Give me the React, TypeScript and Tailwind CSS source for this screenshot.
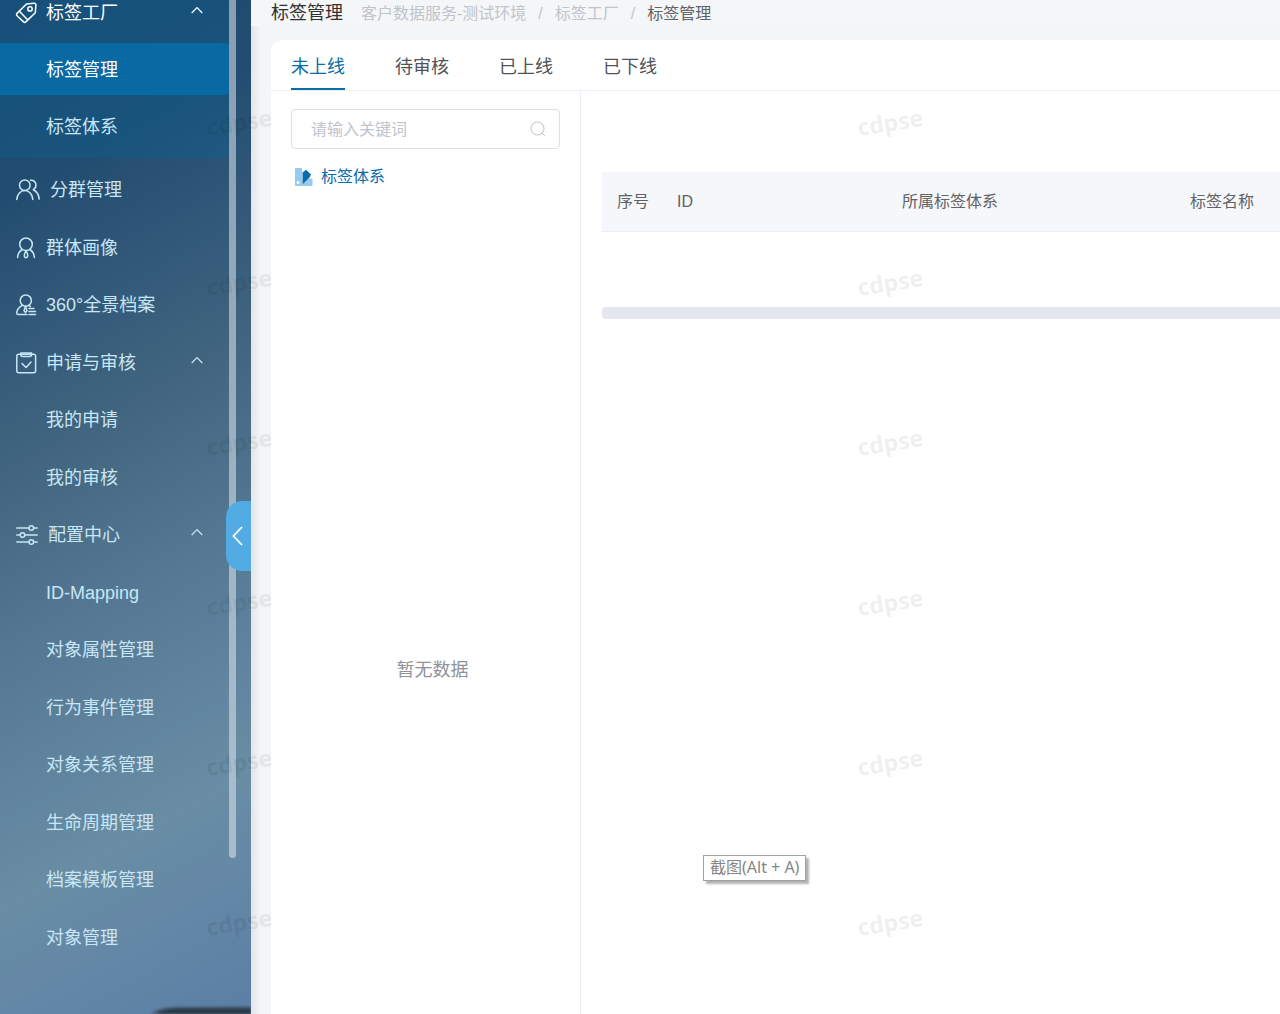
import { useState } from "react";
import type { ReactNode } from "react";
import { clsx } from "clsx";

function Icon({ width = 20, children }: { width?: number; children: ReactNode }) {
  return (
    <svg
      width={width}
      height={22}
      viewBox={`0 0 ${width} 22`}
      fill="none"
      stroke="currentColor"
      strokeWidth={1.5}
      strokeLinecap="round"
      strokeLinejoin="round"
      className="shrink-0 overflow-visible"
      aria-hidden="true"
    >
      {children}
    </svg>
  );
}

const TagIcon = () => (
  <Icon>
    <path d="M10.5 2 18 1.200c1.200-.1 2 .7 1.900 1.900l-.6 7.600-9.500 9.200a1.600 1.600 0 0 1-2.200 0L1 13.700a1.600 1.600 0 0 1 0-2.300z" />
    <path d="m3.400 9.300 8.200 8.400" />
    <circle cx="14" cy="6.900" r="2.200" />
  </Icon>
);

const GroupIcon = () => (
  <Icon width={24}>
    <circle cx="8.800" cy="6.300" r="5.300" />
    <path d="M.8 20.500c.2-5 3.500-8.900 8-8.900s7.800 3.900 8 8.900" />
    <path d="M14.500 1.200c3.200-.4 5.500 2 5.500 4.900 0 2-1 3.700-2.700 4.600 3.200 1.500 5.500 5 5.900 9.400" />
  </Icon>
);

const PortraitIcon = () => (
  <Icon>
    <circle cx="10" cy="7.300" r="6.300" />
    <path d="M1.600 20.500c.2-3.600 1.800-6.300 4.600-8M18.400 20.500c-.2-3.600-1.800-6.300-4.600-8" />
    <path d="M10 14c-1 1.500-1.700 3-1.700 4.300 0 1.400.7 2.400 1.700 2.400s1.700-1 1.700-2.400C11.700 17 11 15.500 10 14z" />
  </Icon>
);

const ArchiveIcon = () => (
  <Icon>
    <circle cx="9.800" cy="6.600" r="5.600" />
    <path d="M6.200 11.300C2.700 13.300.8 16 .8 19.200c0 .8.500 1.300 1.300 1.300H11M13.300 11.600l1 .9" />
    <path d="M9.500 12.600 8 16.500l1.500 2.200 1.500-2.200zM13 14.500h5M13 17.500h6.500M13 20.500h6.500" />
  </Icon>
);

const ClipboardIcon = () => (
  <Icon>
    <rect x=".8" y="2.300" width="18.800" height="18.500" rx="2" />
    <path d="M4.800 1h10.800v1.500a2 2 0 0 1-2 2H6.800a2 2 0 0 1-2-2zM6 11.500l4 4 5-5.500" />
  </Icon>
);

const SlidersIcon = () => (
  <Icon width={22}>
    <path d="M.8 4h12M18 4h3.200M.8 11H4M9 11h12.200M.8 18h12M18 18h3.200" />
    <circle cx="15.300" cy="4" r="2.300" />
    <circle cx="6.500" cy="11" r="2.300" />
    <circle cx="15.300" cy="18" r="2.300" />
  </Icon>
);

const Chevron = ({ open }: { open: boolean }) => (
  <svg
    width="12"
    height="8"
    viewBox="0 0 12 8"
    fill="none"
    stroke="currentColor"
    strokeWidth="1.200"
    className={clsx("mb-1.5 ml-auto", !open && "rotate-180")}
    aria-hidden="true"
  >
    <path d="m.7 7 5.300-5.500L11.300 7" />
  </svg>
);

interface MenuItem {
  label: string;
  icon?: ReactNode;
  expandable?: boolean;
}

const factoryItems: MenuItem[] = [
  { label: "标签工厂", icon: <TagIcon />, expandable: true },
  { label: "标签管理" },
  { label: "标签体系" },
];

const menuItems: MenuItem[] = [
  { label: "分群管理", icon: <GroupIcon /> },
  { label: "群体画像", icon: <PortraitIcon /> },
  { label: "360°全景档案", icon: <ArchiveIcon /> },
  { label: "申请与审核", icon: <ClipboardIcon />, expandable: true },
  { label: "我的申请" },
  { label: "我的审核" },
  { label: "配置中心", icon: <SlidersIcon />, expandable: true },
  { label: "ID-Mapping" },
  { label: "对象属性管理" },
  { label: "行为事件管理" },
  { label: "对象关系管理" },
  { label: "生命周期管理" },
  { label: "档案模板管理" },
  { label: "对象管理" },
];

function MenuRow({ item, active }: { item: MenuItem; active?: boolean }) {
  const rowClass = clsx(
    "flex h-[52px] w-full items-center pt-[2px] pr-[26px]",
    item.icon ? "gap-[10px] pl-4" : "pl-[46px]",
    active && "rounded-r-sm bg-[#0869a3] text-white"
  );

  if (item.expandable) {
    return (
      <button type="button" aria-expanded="true" className={rowClass}>
        {item.icon}
        {item.label}
        <Chevron open />
      </button>
    );
  }

  return (
    <a href="#" className={rowClass} aria-current={active ? "page" : undefined}>
      {item.icon}
      {item.label}
    </a>
  );
}

function Sidebar() {
  return (
    <aside className="relative w-[251px] shrink-0 overflow-hidden bg-[linear-gradient(151deg,#1e486c_0%,#234d70_18%,#33597a_30%,#42667f_42%,#547893_57%,#5f839d_68%,#688da4_79%,#6488a6_87%,#5b7fa5_100%)] text-lg text-[#c8e6f5]">
      <nav className="w-[229px]">
        <ul className="-mt-[17px] rounded-br-sm bg-[#0a6296]/35 pb-[3px]">
          {factoryItems.map((item, i) => (
            <li
              key={item.label}
              className={clsx("flex h-[57px] items-center last:h-[58px]", i === 0 && "text-white")}
            >
              <MenuRow item={item} active={item.label === "标签管理"} />
            </li>
          ))}
        </ul>
        <ul className="pt-[2px]">
          {menuItems.map((item) => (
            <li key={item.label} className="flex items-center odd:h-[58px] even:h-[57px]">
              <MenuRow item={item} />
            </li>
          ))}
        </ul>
      </nav>
      <div className="absolute top-0 right-[15px] h-[858px] w-[7px] rounded-b-full bg-[#dfe6ec]/55" />
      <button
        type="button"
        aria-label="收起菜单"
        className="absolute top-[501px] right-0 flex h-[70px] w-[25px] items-center justify-center rounded-l-2xl bg-[#52ace3] pr-[2px] text-white"
      >
        <svg width="12" height="20" viewBox="0 0 12 20" fill="none" stroke="currentColor" strokeWidth="1.800">
          <path d="M10 1 1.500 10l8.500 9" />
        </svg>
      </button>
      <svg
        className="absolute right-0 bottom-0 blur-[1px]"
        width="104"
        height="9"
        viewBox="0 0 104 9"
        aria-hidden="true"
      >
        <path d="M3 10C9 3 17 2 32 1.500L106 1v10z" fill="#4a6078" />
        <path d="M8 10c5-5 12-6.500 26-6.500h72V11z" fill="#2c3a48" />
      </svg>
    </aside>
  );
}

const tabs = ["未上线", "待审核", "已上线", "已下线"];

function TopBar() {
  return (
    <header className="flex h-[26px] items-start bg-[#f4f6f8] pl-5">
      <h1 className="text-lg leading-[26px] text-[#303133]">标签管理</h1>
      <nav aria-label="面包屑" className="ml-[18px] text-base leading-[28px] text-[#c0c4cc]">
        <ol className="flex gap-3">
          <li><a href="#">客户数据服务-测试环境</a></li>
          <li>/</li>
          <li><a href="#">标签工厂</a></li>
          <li>/</li>
          <li className="text-[#606266]" aria-current="page">标签管理</li>
        </ol>
      </nav>
    </header>
  );
}

function TagTree() {
  return (
    <section className="flex w-[310px] shrink-0 flex-col border-r border-[#ebeef5] px-5 pt-[18px]">
      <label className="flex h-10 items-center rounded border border-[#dcdfe6] pr-[13px] pl-[19px] text-base text-[#c0c4cc]">
        <input
          type="text"
          aria-label="关键词"
          placeholder="请输入关键词"
          className="min-w-0 flex-1 pt-[2px] text-[#606266] outline-none placeholder:text-[#c0c4cc]"
        />
        <svg width="16" height="16" viewBox="0 0 16 16" fill="none" stroke="currentColor" aria-hidden="true">
          <circle cx="7.500" cy="7.500" r="6.500" />
          <path d="m12 12 3 3" />
        </svg>
      </label>
      <a href="#" className="mt-[15px] flex h-[26px] items-center gap-2 pl-[3px] text-base text-[#0a6cab]">
        <svg width="19" height="18" viewBox="0 0 19 18" aria-hidden="true">
          <rect x="1" width="7" height="18" rx="1" fill="#93ccf0" />
          <path d="M17.500 10.500c.6 0 1 .4 1 1V17c0 .6-.4 1-1 1H7l7-7.500z" fill="#93ccf0" />
          <path d="M8.500 4.500 12 1.800l5 4.700-1.500 3-7 7z" fill="#0a6cab" />
          <circle cx="4" cy="14.500" r="1.500" fill="#fff" />
        </svg>
        标签体系
      </a>
      <p className="mt-[466px] pl-[14px] text-center text-lg text-[#909399]">暂无数据</p>
    </section>
  );
}

function TagTable() {
  return (
    <section className="min-w-0 flex-1 overflow-hidden pt-[81px] pl-[21px]">
      <table className="w-full table-fixed text-left text-base text-[#606266]">
        <thead>
          <tr className="h-[59px] border-b border-[#ebeef5] bg-[#f5f7fa]">
            <th className="w-[60px] pt-[2px] pl-[15px] font-normal whitespace-nowrap">序号</th>
            <th className="w-[225px] pt-[2px] pl-[15px] font-normal">ID</th>
            <th className="w-[288px] pt-[2px] pl-[15px] font-normal">所属标签体系</th>
            <th className="pt-[2px] pl-[15px] font-normal whitespace-nowrap">标签名称</th>
          </tr>
        </thead>
      </table>
      <div className="mt-[75px] h-3 rounded-l bg-[#e4e7ef]" />
    </section>
  );
}

function Watermark() {
  return (
    <div
      aria-hidden="true"
      className="pointer-events-none absolute inset-0 grid auto-rows-[160px] grid-cols-[651px_651px] overflow-hidden pt-[42px] pl-[206px] font-['Noto_Sans','Open_Sans',sans-serif] text-[23px] font-bold text-black/8"
    >
      {Array.from({ length: 12 }, (_, i) => (
        <div key={i} className="flex h-40 items-center">
          <span className="-rotate-9">cdpse</span>
        </div>
      ))}
    </div>
  );
}

export default function App() {
  const [tab, setTab] = useState(tabs[0]);

  return (
    <div className="relative flex min-h-screen overflow-hidden bg-[#f4f5f8] font-['Liberation_Sans','Noto_Sans_CJK_SC',sans-serif]">
      <Sidebar />
      <div className="flex min-w-0 flex-1 flex-col">
        <TopBar />
        <div className="flex flex-1 bg-[linear-gradient(to_right,#e4e5e8,#f4f5f8_10px)] pt-[14px] pl-5">
          <main className="flex min-w-0 flex-1 flex-col rounded-tl-xl bg-white">
            <div role="tablist" className="flex h-[51px] gap-[50px] border-b border-[#ebeef5] pl-5 text-lg">
              {tabs.map((name) => (
                <button
                  key={name}
                  type="button"
                  role="tab"
                  aria-selected={tab === name}
                  onClick={() => setTab(name)}
                  className={clsx(
                    "border-b-2 pt-[6px]",
                    tab === name ? "border-[#0a6cab] text-[#0a6cab]" : "border-transparent text-[#505359]"
                  )}
                >
                  {name}
                </button>
              ))}
            </div>
            <div className="flex flex-1">
              <TagTree />
              <TagTable />
            </div>
          </main>
        </div>
      </div>
      <Watermark />
      <div
        role="tooltip"
        className="absolute top-[855px] left-[703px] h-[26px] border border-[#a0a0a0] bg-white px-[6px] font-['Noto_Sans','Noto_Sans_CJK_SC',sans-serif] text-base leading-[23px] text-[#868686] shadow-[3px_3px_2px_rgba(0,0,0,0.3)]"
      >
        截图(Alt + A)
      </div>
    </div>
  );
}
